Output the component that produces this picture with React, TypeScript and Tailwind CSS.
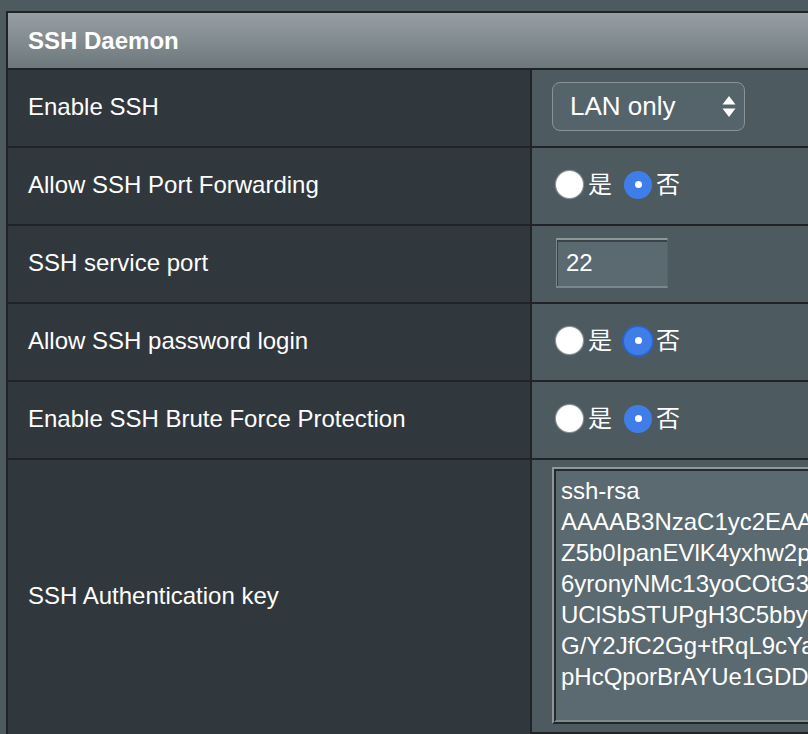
import { ReactNode } from 'react';

const font = { fontFamily: '"Liberation Sans", Arial, "Noto Sans CJK SC", sans-serif' };

const keyLines = [
  'ssh-rsa',
  'AAAAB3NzaC1yc2EAAAADAQABAAABAQC7',
  'Z5b0IpanEVlK4yxhw2pQk8rTn3WbX',
  '6yronyNMc13yoCOtG3fRk2ZpLw9sD',
  'UClSbSTUPgH3C5bbyC7qVnM0aKe4',
  'G/Y2JfC2Gg+tRqL9cYa8HhV3uE1x',
  'pHcQporBrAYUe1GDDYw5sLm2oTj',
];

function Row({ label, height = 'h-[78px] pb-[3px]', children }: { label: string; height?: string; children: ReactNode }) {
  return (
    <div className={`flex border-b-2 border-[#202427] bg-[#4d5a5f] ${height}`}>
      <div className="w-[524px] shrink-0 bg-[#31383d] border-r-2 border-[#202427] -mb-[3px] pb-[3px] flex items-center pl-[20px] text-[24px] text-white">
        {label}
      </div>
      <div className="flex-1 flex items-center pl-[20px]">{children}</div>
    </div>
  );
}

function YesNo({ focus }: { focus?: boolean }) {
  return (
    <div className="flex items-center ml-1 text-[24px] text-white">
      <span className="w-[27px] h-[27px] rounded-full bg-white shadow-[0_0_1px_1px_rgba(255,255,255,0.4)]" />
      <span className="ml-[5px]">是</span>
      <span
        className={`ml-[12px] w-[28px] h-[28px] rounded-full bg-[#3f7ee9] flex items-center justify-center ${
          focus ? 'ring-2 ring-[#2f62c4]' : ''
        }`}
      >
        <span className="w-[7px] h-[7px] rounded-full bg-white" />
      </span>
      <span className="ml-[4px]">否</span>
    </div>
  );
}

export default function App() {
  return (
    <div className="w-[808px] h-[734px] overflow-hidden bg-[#4d5a5f] pl-[6px] pt-[11px]" style={font}>
      <div className="w-[860px] border-l-2 border-t-2 border-[#202427]">
        <div className="h-[57px] border-b-2 border-[#202427] bg-linear-to-b from-[#979fa4] to-[#6d787d] flex items-center pl-[20px] text-[24px] font-bold text-white">
          SSH Daemon
        </div>

        <Row label="Enable SSH">
          <div className="w-[193px] h-[49px] rounded-[8px] border border-[#8a9498] bg-[#55646a] flex items-center justify-between pl-[17px] pr-[8px] text-[26px] text-white">
            <span>LAN only</span>
            <svg width="14" height="22" viewBox="0 0 14 22">
              <path d="M7 0 L13.5 8.5 L0.5 8.5 Z" fill="white" />
              <path d="M0.5 12.5 L13.5 12.5 L7 21 Z" fill="white" />
            </svg>
          </div>
        </Row>

        <Row label="Allow SSH Port Forwarding">
          <YesNo />
        </Row>

        <Row label="SSH service port">
          <div className="ml-1 w-[112px] h-[50px] bg-[#5a6a70] border-t-2 border-l border-t-[#8d979b] border-l-[#7d878b] border-b-2 border-b-[#7c878b] border-r border-r-[#56646a] shadow-[inset_0_2px_0_#3a4448,inset_1px_0_0_#3a4448] flex items-center pl-[9px] text-[24px] text-white">
            22
          </div>
        </Row>

        <Row label="Allow SSH password login">
          <YesNo focus />
        </Row>

        <Row label="Enable SSH Brute Force Protection">
          <YesNo />
        </Row>

        <Row label="SSH Authentication key" height="h-[274px]">
          <div className="self-start mt-[7px] w-[300px] h-[257px] border-t-2 border-l-2 border-t-[#8e979b] border-l-[#8e979b] border-b-2 border-b-[#22272a] border-r-2 border-r-[#22272a]">
            <div className="w-full h-full border-t-2 border-l-2 border-t-[#24292c] border-l-[#24292c] border-b-2 border-b-[#7f898d] bg-[#5a6a70] pt-[4px] pl-[5px] text-[24px] leading-[31px] text-white overflow-hidden">
              {keyLines.map((l) => (
                <div key={l} className="whitespace-nowrap">
                  {l}
                </div>
              ))}
            </div>
          </div>
        </Row>
      </div>
    </div>
  );
}
